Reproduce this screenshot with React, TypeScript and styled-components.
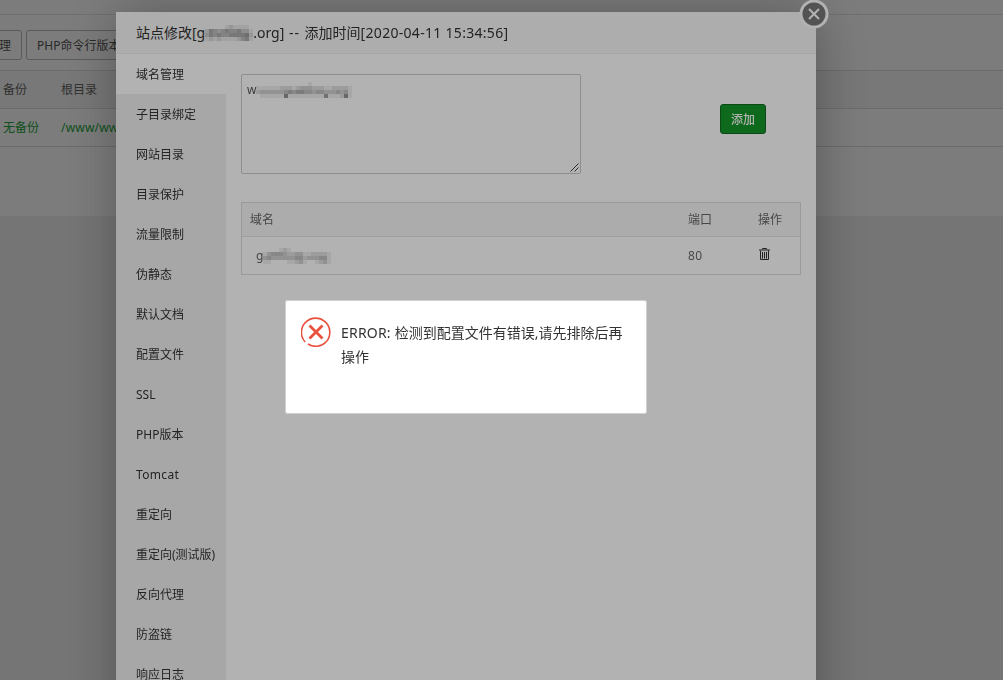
import React from 'react';
import styled, { createGlobalStyle, css } from 'styled-components';

const Global = createGlobalStyle`
  *, *::before, *::after { box-sizing: border-box; }
  body {
    margin: 0;
    height: 680px;
    overflow: hidden;
    background: #f1f1f1;
    color: #666;
    font: 12px/20px "Noto Sans", "Noto Sans CJK SC", sans-serif;
  }
`;

const Shade = styled.div`
  position: fixed;
  inset: 0;
  background: rgba(0, 0, 0, 0.3);
`;

const Site = styled.main`
  height: 216px;
  background: #fff;
  overflow: hidden;
`;

const TopEdge = styled.div`
  height: 15px;
  border-bottom: 1px solid #e6e6e6;
`;

const Tools = styled.div`
  display: flex;
  gap: 4px;
  height: 55px;
  padding-top: 15px;
`;

const ToolButton = styled.button<{ $first?: boolean }>`
  flex: none;
  height: 30px;
  width: ${p => (p.$first ? 62 : 112)}px;
  margin-left: ${p => (p.$first ? -40 : 0)}px;
  padding: 2px 10px 0;
  border: 1px solid #bbb;
  border-radius: 3px;
  background: #fff;
  color: #555;
  font: inherit;
  text-align: ${p => (p.$first ? 'right' : 'left')};
  white-space: nowrap;
`;

const SiteRow = styled.div<{ $head?: boolean }>`
  display: grid;
  grid-template-columns: 58px 1fr;
  align-items: center;
  height: 38px;
  padding-left: 3px;
  border-bottom: 1px solid #ddd;
  background: ${p => (p.$head ? '#f6f6f6' : '#fff')};
  color: ${p => (p.$head ? '#666' : '#20a53a')};
  ${p => p.$head && css`border-top: 1px solid #ddd; height: 39px;`}
`;

const Path = styled.span`
  letter-spacing: 0.2px;
`;

const Dialog = styled.section`
  position: fixed;
  left: 116px;
  top: 12px;
  width: 700px;
  height: 720px;
  background: #fff;
  box-shadow: 1px 1px 50px rgba(0, 0, 0, 0.3);
`;

const DialogTitle = styled.header`
  display: flex;
  align-items: center;
  height: 42px;
  padding-left: 20px;
  border-bottom: 1px solid #eee;
  background: #f8f8f8;
  color: #333;
  font-size: 14px;
  white-space: pre;
`;

const Spaced = styled.span<{ $by: number }>`
  letter-spacing: ${p => p.$by}px;
`;

const CloseButton = styled.button`
  position: absolute;
  top: -13px;
  right: -13px;
  width: 30px;
  height: 30px;
  padding: 0;
  border: 0;
  background: none;
  svg { display: block; }
`;

const DialogBody = styled.div`
  display: flex;
  height: 678px;
`;

const Menu = styled.nav`
  width: 110px;
  background: #f0f0f0;
`;

const MenuItem = styled.div<{ $on?: boolean; $latin?: boolean }>`
  height: 40px;
  padding: 1px 0 0 20px;
  line-height: 40px;
  color: #333;
  white-space: nowrap;
  letter-spacing: ${p => (p.$latin ? '0.35px' : 'normal')};
  background: ${p => (p.$on ? '#fff' : 'transparent')};
`;

const Panel = styled.div`
  flex: 1;
  padding: 20px 15px;
`;

const AddForm = styled.div`
  display: flex;
  align-items: flex-start;
  justify-content: space-between;
  padding-right: 35px;
`;

const DomainBox = styled.div`
  display: flex;
  flex-direction: column;
  justify-content: space-between;
  width: 340px;
  height: 100px;
  padding: 5px 0 0 5px;
  border: 1px solid #ccc;
  border-radius: 2px;
  color: #555;
  svg.grip { align-self: flex-end; }
`;

const AddButton = styled.button`
  width: 46px;
  height: 30px;
  margin-top: 30px;
  padding: 2px 0 0;
  border: 1px solid #116b22;
  border-radius: 3px;
  background: #149829;
  color: #fff;
  font: inherit;
  font-weight: 500;
`;

const Table = styled.div`
  margin-top: 28px;
  border: 1px solid #ddd;
`;

const Row = styled.div<{ $head?: boolean }>`
  display: grid;
  grid-template-columns: 438px 70px 1fr;
  align-items: center;
  height: ${p => (p.$head ? 34 : 37)}px;
  padding-left: 8px;
  background: ${p => (p.$head ? '#f6f6f6' : '#fff')};
  border-bottom: ${p => (p.$head ? '1px solid #e3e3e3' : '0')};
  > svg { margin-bottom: 3px; }
`;

const Masked = styled.span<{ $indent?: number }>`
  display: inline-flex;
  align-items: center;
  padding-left: ${p => p.$indent ?? 0}px;
`;

const Alert = styled.div`
  position: fixed;
  left: 285px;
  top: 300px;
  display: flex;
  gap: 10px;
  width: 362px;
  height: 114px;
  padding: 16px 20px 0 15px;
  border: 1px solid #d0d0d0;
  border-radius: 2px;
  background: #fff;
  background-clip: padding-box;
  svg { flex: none; }
`;

const AlertText = styled.p`
  margin: 4px 0 0;
  color: #333;
  font-size: 14px;
  line-height: 24px;
  white-space: nowrap;
`;

/* Each digit is the darkness of one square of the redaction mosaic. */
const Mosaic = ({ rows, cell = 4 }: { rows: string[]; cell?: number }) => (
  <svg width={rows[0].length * cell} height={rows.length * cell} shapeRendering="crispEdges">
    {rows.flatMap((r, y) =>
      [...r].map((d, x) => (
        <rect key={`${x}-${y}`} x={x * cell} y={y * cell} width={cell} height={cell} fill="#000" opacity={+d * 0.06} />
      )),
    )}
  </svg>
);

const menu = ['域名管理', '子目录绑定', '网站目录', '目录保护', '流量限制', '伪静态', '默认文档', '配置文件', 'SSL', 'PHP版本', 'Tomcat', '重定向', '重定向(测试版)', '反向代理', '防盗链', '响应日志'];

export default function App() {
  return (
    <>
      <Global />
      <Site>
        <TopEdge />
        <Tools>
          <ToolButton $first>理</ToolButton>
          <ToolButton>PHP命令行版本</ToolButton>
        </Tools>
        <SiteRow $head><span>备份</span><span>根目录</span></SiteRow>
        <SiteRow><span>无备份</span><Path>/www/wwwroot</Path></SiteRow>
      </Site>
      <Shade />
      <Dialog>
        <DialogTitle>
          <span>站点修改[g</span>
          <Mosaic rows={['000001211110', '254345445331', '354544555562', '121211112451']} />
          <span>.org]</span>
          <Spaced $by={1}>{' -- '}</Spaced>
          <span>添加时间</span>
          <Spaced $by={0.3}>[2020-04-11 15:34:56]</Spaced>
        </DialogTitle>
        <DialogBody>
          <Menu>{menu.map((m, i) => <MenuItem key={m} $on={i === 0} $latin={m === 'Tomcat'}>{m}</MenuItem>)}</Menu>
          <Panel>
            <AddForm>
              <DomainBox>
                <Masked>w<Mosaic rows={['000000000000010000000000', '111111222123332221122221', '233333345455443443334341', '011111171111111116111271']} /></Masked>
                <svg className="grip" width="10" height="10" viewBox="0 0 10 10" stroke="#444" strokeWidth="1">
                  <path d="M0.5 8.5 8.5 .5M4.5 8.5l4-4" />
                </svg>
              </DomainBox>
              <AddButton>添加</AddButton>
            </AddForm>
            <Table>
              <Row $head><span>域名</span><span>端口</span><span>操作</span></Row>
              <Row>
                <Masked $indent={6}>g<Mosaic rows={['00001210000000000', '13444322331122221', '34333333442333441', '11000011231001231']} /></Masked>
                <Spaced $by={0.3}>80</Spaced>
                <svg width="13" height="14" viewBox="0 0 13 14" fill="none" stroke="#333">
                  <path d="M1 3h11M4.5 2.5v-1h4v1M2.5 3.5v9h8v-9M4.5 5v6.5M6.5 5v6.5M8.5 5v6.5" />
                </svg>
              </Row>
            </Table>
          </Panel>
        </DialogBody>
        <CloseButton>
          <svg width="30" height="30" viewBox="0 0 30 30">
            <circle cx="15" cy="15" r="13" fill="#777" stroke="#fff" strokeWidth="3" />
            <path d="M10 10l10 10M20 10 10 20" stroke="#fff" strokeWidth="2" />
          </svg>
        </CloseButton>
      </Dialog>
      <Shade />
      <Alert>
        <svg width="30" height="30" viewBox="0 0 30 30" fill="none" stroke="#e9513f">
          <path d="M4.2 25A14.2 14.2 0 1 1 25 25A14.2 14.2 0 0 1 7 27" strokeWidth="1.6" />
          <path d="M8.5 8.5l13 13M21.5 8.5l-13 13" strokeWidth="2.8" />
        </svg>
        <AlertText><Spaced $by={0.2}>ERROR: </Spaced>检测到配置文件有错误,请先排除后再<br />操作</AlertText>
      </Alert>
    </>
  );
}
